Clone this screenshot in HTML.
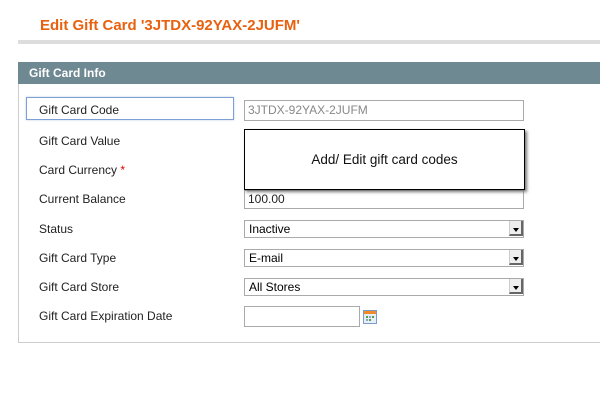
<!DOCTYPE html>
<html><head><style>
body{margin:0;width:600px;height:400px;background:#fff;font-family:"Liberation Sans",Arial,sans-serif;position:relative;overflow:hidden}
.a{position:absolute}
.lbl{position:absolute;left:39px;font-size:12px;color:#222;line-height:14px}
.inp{position:absolute;left:244px;width:278px;height:19px;border:1px solid #aaa;box-sizing:border-box;font-size:12px;line-height:17px;padding-left:3px;background:#fff}
.sel{position:absolute;left:244px;width:280px;height:18px;border:1px solid #aaa;box-sizing:border-box;font-size:12px;line-height:16px;padding-left:4px;background:#fff}
.sel:after{content:"";position:absolute;right:0;top:0;width:14px;height:15px;background:#eee;border-left:1px solid #ccc;border-right:2px solid #666;border-bottom:2px solid #666;box-sizing:border-box}
.sel i{position:absolute;right:4px;top:7px;width:0;height:0;border-left:3px solid transparent;border-right:3px solid transparent;border-top:4px solid #000;z-index:2}
</style></head><body>
<div class="a" style="left:40px;top:17px;font-size:15px;font-weight:bold;color:#e8610f">Edit Gift Card '3JTDX-92YAX-2JUFM'</div>
<div class="a" style="left:18px;top:40px;width:582px;height:4px;background:#ddd"></div>
<div class="a" style="left:18px;top:62px;width:582px;height:280px;border-left:1px solid #ccc;border-bottom:1px solid #ccc"></div>
<div class="a" style="left:18px;top:62px;width:582px;height:22px;background:#6f8992;color:#fff;font-weight:bold;font-size:12px;line-height:22px;padding-left:11px;box-sizing:border-box">Gift Card Info</div>
<div class="a" style="left:26px;top:97px;width:208px;height:23px;border:1px solid #7d9fd6;box-sizing:border-box;box-shadow:0 0 2px #bcd"></div>
<div class="lbl" style="top:103px">Gift Card Code</div>
<div class="lbl" style="top:134px">Gift Card Value</div>
<div class="lbl" style="top:163px">Card Currency <span style="color:#d00">*</span></div>
<div class="lbl" style="top:192px">Current Balance</div>
<div class="lbl" style="top:222px">Status</div>
<div class="lbl" style="top:251px">Gift Card Type</div>
<div class="lbl" style="top:280px">Gift Card Store</div>
<div class="lbl" style="top:309px">Gift Card Expiration Date</div>
<div class="inp" style="top:100px;height:21px;line-height:19px;color:#888;width:280px">3JTDX-92YAX-2JUFM</div>
<div class="inp" style="top:190px;width:280px;color:#222">100.00</div>
<div class="a" style="left:244px;top:129px;width:281px;height:61px;border:1px solid #000;box-sizing:border-box;background:#fff;box-shadow:2px 2px 3px #777;font-size:13.5px;line-height:59px;text-align:center;color:#111">Add/ Edit gift card codes</div>
<div class="sel" style="top:220px">Inactive<i></i></div>
<div class="sel" style="top:249px">E-mail<i></i></div>
<div class="sel" style="top:278px">All Stores<i></i></div>
<div class="inp" style="top:306px;width:116px;height:21px"></div>
<svg class="a" style="left:363px;top:310px" width="14" height="14" viewBox="0 0 14 14"><rect x="0.5" y="0.5" width="13" height="13" fill="#e6eef7" stroke="#7a9cc6"/><rect x="1" y="1" width="12" height="3" fill="#f08a2a"/><rect x="3" y="6" width="2" height="2" fill="#5a9a4a"/><rect x="6" y="6" width="2" height="2" fill="#8ab"/><rect x="9" y="6" width="2" height="2" fill="#5a9a4a"/><rect x="3" y="9" width="2" height="2" fill="#8ab"/><rect x="6" y="9" width="2" height="2" fill="#5a9a4a"/></svg>
</body></html>
